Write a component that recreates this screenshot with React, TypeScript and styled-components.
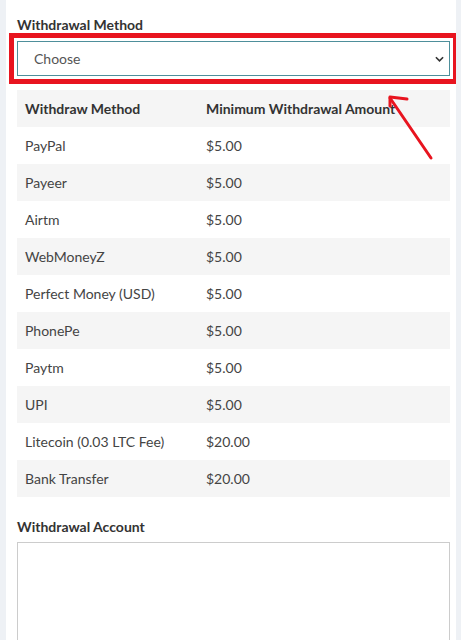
import styled, { createGlobalStyle } from "styled-components";

type Limit = {
  method: string;
  min: string;
};

const limits: Limit[] = [
  { method: "PayPal", min: "$5.00" },
  { method: "Payeer", min: "$5.00" },
  { method: "Airtm", min: "$5.00" },
  { method: "WebMoneyZ", min: "$5.00" },
  { method: "Perfect Money (USD)", min: "$5.00" },
  { method: "PhonePe", min: "$5.00" },
  { method: "Paytm", min: "$5.00" },
  { method: "UPI", min: "$5.00" },
  { method: "Litecoin (0.03 LTC Fee)", min: "$20.00" },
  { method: "Bank Transfer", min: "$20.00" },
];

const GlobalStyle = createGlobalStyle`
  html, body {
    margin: 0;
    background: #eef1f5;
    font-family: Lato, "Open Sans", "Liberation Sans", sans-serif;
    color: #333;
    overflow: hidden;
  }
`;

export default function App() {
  return (
    <>
      <GlobalStyle />
      <Panel>
        <Label htmlFor="method">Withdrawal Method</Label>
        <Highlight>
          <SelectBox>
            <Select id="method" defaultValue="">
              <option value="">Choose</option>
              {limits.map((l) => (
                <option key={l.method}>{l.method}</option>
              ))}
            </Select>
            <Chevron viewBox="0 0 10 6" aria-hidden="true">
              <path d="M1 1l4 4 4-4" />
            </Chevron>
          </SelectBox>
        </Highlight>

        <Table>
          <colgroup>
            <MethodCol />
            <col />
          </colgroup>
          <thead>
            <tr>
              <th>Withdraw Method</th>
              <th>Minimum Withdrawal Amount</th>
            </tr>
          </thead>
          <tbody>
            {limits.map((l) => (
              <tr key={l.method}>
                <td>{l.method}</td>
                <td>{l.min}</td>
              </tr>
            ))}
          </tbody>
        </Table>

        <Label htmlFor="account" $top={20}>
          Withdrawal Account
        </Label>
        <Account id="account" />

        {/* annotation arrow pointing at the select */}
        <Arrow viewBox="0 0 80 80" aria-hidden="true">
          <path d="M55 73L14 13" />
          <path d="M31 14L14 12L14 21" />
        </Arrow>
      </Panel>
    </>
  );
}

const Panel = styled.div`
  position: relative;
  margin: 0 5px 0 6px;
  padding: 15px 6px 0 11px;
  background: #fff;
  height: 640px;
  box-sizing: border-box;
  overflow: hidden;
`;

const Label = styled.label<{ $top?: number }>`
  display: block;
  margin-top: ${({ $top }) => $top ?? 0}px;
  margin-bottom: 6px;
  font-size: 14px;
  line-height: 20px;
  font-weight: 700;
  color: #333;
`;

const Highlight = styled.div`
  outline: 5px solid #e8141f;
  outline-offset: 3px;
`;

const SelectBox = styled.div`
  position: relative;
`;

const Select = styled.select`
  display: block;
  width: 100%;
  height: 35px;
  padding: 0 30px 0 16px;
  border: 1px solid #4e8f9b;
  border-radius: 0;
  background: #fff;
  appearance: none;
  font-family: inherit;
  font-size: 14px;
  color: #555;
  outline: none;
`;

const Chevron = styled.svg`
  position: absolute;
  right: 6px;
  top: 15px;
  width: 9px;
  height: 6px;
  fill: none;
  stroke: #333;
  stroke-width: 1.8;
  pointer-events: none;
`;

const Table = styled.table`
  width: 100%;
  table-layout: fixed;
  margin-top: 14px;
  border-collapse: collapse;
  font-size: 14px;

  th,
  td {
    height: 37px;
    padding: 0 8px;
    text-align: left;
    vertical-align: middle;
    white-space: nowrap;
  }
  th {
    font-weight: 700;
    color: #333;
  }
  td {
    color: #444;
  }
  thead tr,
  tbody tr:nth-child(even) {
    background: #f5f5f5;
  }
`;

const MethodCol = styled.col`
  width: 181px;
`;

const Account = styled.textarea`
  display: block;
  width: 100%;
  height: 140px;
  margin-top: -1px;
  box-sizing: border-box;
  border: 1px solid #ccc;
  resize: none;
`;

const Arrow = styled.svg`
  position: absolute;
  left: 370px;
  top: 85px;
  width: 80px;
  height: 80px;
  fill: none;
  stroke: #e8141f;
  stroke-width: 3;
  stroke-linecap: round;
  stroke-linejoin: round;
`;
